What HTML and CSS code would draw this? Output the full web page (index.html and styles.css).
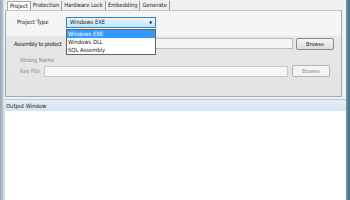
FILE: index.html
```html
<!DOCTYPE html>
<html>
<head>
<meta charset="utf-8">
<link rel="stylesheet" href="styles.css">
</head>
<body>
<div class="window">
  <div class="frame-left"></div>
  <div class="client">
    <div class="tabs">
      <span class="tab active">Project</span>
      <span class="tab">Protection</span>
      <span class="tab">Hardware Lock</span>
      <span class="tab">Embedding</span>
      <span class="tab">Generate</span>
    </div>
    <div class="panel">
      <div class="row row-type">
        <span class="label">Project Type</span>
        <div class="combo">
          <span class="combo-text">Windows EXE</span>
          <span class="arrow">▼</span>
          <div class="dropdown">
            <div class="opt sel">Windows EXE</div>
            <div class="opt">Windows DLL</div>
            <div class="opt">SQL Assembly</div>
          </div>
        </div>
      </div>
      <div class="row row-asm">
        <span class="label">Assembly to protect</span>
        <div class="textbox asm-box"></div>
        <div class="btn">Browse</div>
      </div>
      <div class="strong">
        <div class="label dis">Strong Name</div>
        <div class="row row-key">
          <span class="label dis">Key File</span>
          <div class="textbox key-box"></div>
          <div class="btn dis-btn">Browse</div>
        </div>
      </div>
    </div>
    <div class="out-head">Output Window</div>
    <div class="out-body"></div>
  </div>
  <div class="frame-right"></div>
</div>
</body>
</html>
```

FILE: styles.css
```css
* { box-sizing: border-box; }
html, body { margin: 0; padding: 0; }
body {
  width: 350px; height: 200px; overflow: hidden;
  font-family: "DejaVu Sans Condensed", "Liberation Sans", sans-serif;
  font-size: 5.8px; color: #1a1a1a;
}
.window { display: flex; width: 350px; height: 200px; }
.frame-left { width: 4px; background: linear-gradient(to right, #9aa6b6, #b8c4d2); border-right: 1px solid #d4dae2; }
.frame-right { width: 4px; background: linear-gradient(to right, #6f98aa, #3f6f86); }
.client { flex: 1; display: flex; flex-direction: column; background: #f0f0f0; }
.tabs { height: 10px; display: flex; align-items: flex-end; padding-left: 3px; }
.tab { height: 9px; line-height: 8px; padding: 0 2px; border-right: 1px solid #9a9a9a; color: #222; }
.tab.active { background: #fafafa; border-left: 1px solid #aaa; border-top: 1px solid #aaa; }
.panel {
  position: relative; height: 87px;
  margin: 0 4px 0 1px; border: 1px solid #a8a8a8; border-top-color: #c4c4c4;
  background: linear-gradient(to bottom, #f6f6f6 0, #f4f4f4 24px, #e6e6e6 26px, #e4e4e4 100%);
}
.row { display: flex; align-items: center; }
.row-type { height: 12px; margin-top: 5px; padding-left: 11px; }
.row-type .label { width: 49px; }
.combo {
  position: relative; width: 90px; height: 11px; z-index: 2;
  border: 1px solid #3c7fb1; background: linear-gradient(#eaf6fd, #bee6fd);
  display: flex; align-items: center; justify-content: space-between; padding: 0 3px 0 3px;
}
.arrow { font-size: 4px; color: #111; }
.dropdown {
  position: absolute; left: -1px; top: 11px; width: 90px;
  background: #fff; border: 1px solid #646464;
}
.opt { height: 8px; line-height: 8px; padding-left: 1px; }
.opt.sel { background: #3399ff; color: #fff; }
.row-asm { height: 13px; margin-top: 9px; padding-left: 8px; }
.row-asm .label { width: 52px; white-space: nowrap; letter-spacing: -0.25px; }
.textbox { height: 11px; background: #f4f4f4; border: 1px solid #bcbcbc; }
.asm-box { width: 227px; }
.btn {
  margin-left: 3px; width: 38px; height: 12px; border: 1px solid #8a8a8a; border-radius: 2px;
  background: linear-gradient(#f4f4f4, #dcdcdc); text-align: center; line-height: 10px; font-size: 5.5px;
}
.strong { margin: 6px 6px 0 9px; padding: 0 0 0 5px; height: 34px; }
.dis { color: #8a8a8a; }
.strong > .label { height: 9px; line-height: 9px; }
.row-key { height: 12px; }
.row-key .label { width: 24px; }
.key-box { width: 244px; background: #f6f6f6; border-color: #c8c8c8; }
.dis-btn { margin-left: 4px; color: #8a8a8a; border-color: #b4b4b4; background: #f4f4f4; }
.out-head {
  margin-top: 2px; height: 12px; line-height: 12px; padding-left: 2px;
  background: linear-gradient(#e4eef8, #d6e4f2); border-top: 1px solid #b8c8da;
  color: #1a1a1a;
}
.out-body { flex: 1; background: #fff; border-left: 1px solid #d8dde4; }
```
